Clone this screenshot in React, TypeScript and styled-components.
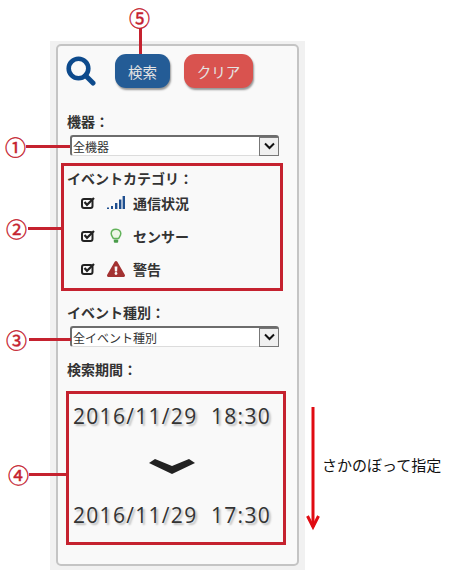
import React from 'react';
import styled, { createGlobalStyle } from 'styled-components';
import { FaExclamationTriangle } from 'react-icons/fa';

const FONT = '"Noto Sans CJK JP", "Noto Sans", sans-serif';

const GlobalStyle = createGlobalStyle`
  html, body {
    margin: 0;
    background: #fff;
  }
  body {
    font-family: ${FONT};
    color: #333;
  }
`;

const categories = [
  { name: '通信状況', icon: 'signal' },
  { name: 'センサー', icon: 'bulb' },
  { name: '警告', icon: 'warning' },
];

const callouts = [
  { mark: '①', top: 135, left: 5, lineTop: 145, lineLeft: 26, lineWidth: 44 },
  { mark: '②', top: 217, left: 6, lineTop: 227, lineLeft: 28, lineWidth: 33 },
  { mark: '③', top: 328, left: 6, lineTop: 338, lineLeft: 29, lineWidth: 42 },
  { mark: '④', top: 463, left: 8, lineTop: 473, lineLeft: 29, lineWidth: 37 },
];

const CheckIcon = () => (
  <svg width="14" height="12" viewBox="0 0 14 12">
    <rect x="1" y="2" width="10.500" height="9" rx="2" fill="none" stroke="#222" strokeWidth="2" />
    <path d="M3.500 5L6 7.800L13 1" fill="none" stroke="#222" strokeWidth="2.200" />
  </svg>
);

const SignalIcon = () => (
  <svg width="18" height="15" viewBox="0 0 18 15">
    <rect x="0" y="12.500" width="2" height="1.500" fill="#1f4f8f" />
    <rect x="4" y="11" width="2" height="3" fill="#1f4f8f" />
    <rect x="8" y="8" width="2.400" height="6" fill="#1f4f8f" />
    <rect x="12" y="4.500" width="2.400" height="9.500" fill="#1f4f8f" />
    <rect x="15.600" y="1" width="2.400" height="13" fill="#1f4f8f" />
  </svg>
);

const BulbIcon = () => (
  <svg width="12" height="16" viewBox="0 0 12 16">
    <path
      d="M6 1.200C3 1.200 1.200 3.200 1.200 5.600c0 2 1.500 3.200 2.200 5h5.200c.7-1.800 2.200-3 2.200-5C10.800 3.200 9 1.200 6 1.200z"
      fill="#eef6e8"
      stroke="#63b35b"
      strokeWidth="1.500"
    />
    <rect x="3.800" y="11.400" width="4.400" height="3.400" rx="1" fill="#4a9c4a" />
  </svg>
);

const SearchIcon = () => (
  <svg width="30" height="30" viewBox="0 0 30 30">
    <circle cx="12.500" cy="12.500" r="9.800" fill="none" stroke="#0d4a8c" strokeWidth="4.600" />
    <path d="M19.500 19.500L27 27" stroke="#0d4a8c" strokeWidth="5" strokeLinecap="round" />
  </svg>
);

const ChevronIcon = () => (
  <svg width="46" height="16" viewBox="0 0 46 16">
    <path d="M0 5L6 1L23 8L40 1L46 5L23 16z" fill="#222" />
  </svg>
);

const SelectBox = ({ text }: { text: string }) => (
  <FakeSelect>
    <span>{text}</span>
    <SelectArrow>
      <svg width="11" height="8" viewBox="0 0 11 8">
        <path d="M1 1.500L5.500 6L10 1.500" fill="none" stroke="#111" strokeWidth="2" />
      </svg>
    </SelectArrow>
  </FakeSelect>
);

const App = () => (
  <Page>
    <GlobalStyle />
    <Backdrop>
      <Panel>
        <Toolbar>
          <SearchIcon />
          <SearchButton>検索</SearchButton>
          <ClearButton>クリア</ClearButton>
        </Toolbar>

        <DeviceLabel>機器：</DeviceLabel>
        <SelectBox text="全機器" />

        <CategoryBox>
          <Label>イベントカテゴリ：</Label>
          {categories.map((c) => (
            <CategoryRow key={c.name}>
              <CheckIcon />
              <IconSlot>
                {c.icon === 'signal' && <SignalIcon />}
                {c.icon === 'bulb' && <BulbIcon />}
                {c.icon === 'warning' && <FaExclamationTriangle size={18} color="#a33232" />}
              </IconSlot>
              <CategoryName>{c.name}</CategoryName>
            </CategoryRow>
          ))}
        </CategoryBox>

        <TypeLabel>イベント種別：</TypeLabel>
        <SelectBox text="全イベント種別" />

        <PeriodLabel>検索期間：</PeriodLabel>
        <PeriodBox>
          <DateText>{'2016/11/29  18:30'}</DateText>
          <ChevronIcon />
          <DateText>{'2016/11/29  17:30'}</DateText>
        </PeriodBox>
      </Panel>
    </Backdrop>

    <TopMark>⑤</TopMark>
    <TopLine />
    {callouts.map((c) => (
      <React.Fragment key={c.mark}>
        <SideMark style={{ top: c.top, left: c.left }}>{c.mark}</SideMark>
        <SideLine style={{ top: c.lineTop, left: c.lineLeft, width: c.lineWidth }} />
      </React.Fragment>
    ))}

    <ArrowNote>
      <svg width="14" height="124" viewBox="0 0 14 124">
        <path d="M7 0V120" stroke="#e00b12" strokeWidth="3" />
        <path d="M1.500 109L7 120L12.500 109" fill="none" stroke="#e00b12" strokeWidth="3" />
      </svg>
      <NoteText>さかのぼって指定</NoteText>
    </ArrowNote>
  </Page>
);

export default App;

const Page = styled.div`
  position: relative;
  width: 458px;
  height: 570px;
  padding: 41px 0 0 50px;
  box-sizing: border-box;
  overflow: hidden;
`;

const Backdrop = styled.div`
  width: 255px;
  height: 529px;
  padding: 3px 6px 0;
  box-sizing: border-box;
  background: #f1f1f1;
`;

const Panel = styled.div`
  width: 243px;
  height: 522px;
  box-sizing: border-box;
  padding: 8px 14px 0 3px;
  background: #f9f9f9;
  border: 2px solid #c4c4c4;
  border-radius: 5px;
`;

const Toolbar = styled.div`
  display: flex;
  align-items: center;
  height: 34px;
  padding-left: 5px;

  svg {
    margin-right: 19px;
  }
`;

const PillButton = styled.div`
  display: flex;
  align-items: center;
  justify-content: center;
  height: 34px;
  box-sizing: border-box;
  border-radius: 11px;
  color: #e4e4e4;
  font-size: 14.500px;
  box-shadow: 1px 2px 2px rgba(0, 0, 0, 0.4);
`;

const SearchButton = styled(PillButton)`
  width: 55px;
  margin-right: 14px;
  background: #245c96;
`;

const ClearButton = styled(PillButton)`
  width: 69px;
  background: #d9534f;
`;

const Label = styled.div`
  font-size: 14px;
  line-height: 18px;
  font-weight: 700;
  color: #333;
`;

const DeviceLabel = styled(Label)`
  margin: 24px 0 0 6px;
`;

const FakeSelect = styled.div`
  display: flex;
  align-items: center;
  justify-content: space-between;
  width: 209px;
  height: 21px;
  margin: 5px 0 0 9px;
  padding-left: 1px;
  box-sizing: border-box;
  background: #fff;
  border-top: 2px solid #6d6d6d;
  border-left: 2px solid #6d6d6d;
  border-bottom: 1px solid #dcdcdc;
  border-radius: 3px;
  font-size: 12px;
  color: #333;
`;

const SelectArrow = styled.div`
  display: flex;
  align-items: center;
  justify-content: center;
  width: 18px;
  height: 17px;
  background: #f0f0f0;
  border: 1px solid #777;
`;

const CategoryBox = styled.div`
  width: 222px;
  height: 128px;
  margin-top: 7px;
  padding: 4px 0 0 3px;
  box-sizing: border-box;
  border: 3px solid #c5222f;

  ${Label} {
    line-height: 16px;
  }
`;

const CategoryRow = styled.div`
  display: flex;
  align-items: center;
  height: 33px;
  padding-left: 14px;
`;

const IconSlot = styled.div`
  display: flex;
  align-items: center;
  justify-content: center;
  width: 20px;
  margin: 0 7px 0 11px;
`;

const CategoryName = styled.span`
  font-size: 14px;
  font-weight: 700;
  color: #333;
`;

const TypeLabel = styled(Label)`
  margin: 12px 0 0 6px;
`;

const PeriodLabel = styled(Label)`
  margin: 13px 0 0 6px;
`;

const PeriodBox = styled.div`
  display: flex;
  flex-direction: column;
  align-items: center;
  justify-content: space-between;
  width: 220px;
  height: 154px;
  margin: 13px 0 0 5px;
  padding: 8px 8px 13px 0;
  box-sizing: border-box;
  border: 3px solid #c5222f;
`;

const DateText = styled.div`
  font-family: "Open Sans", sans-serif;
  font-size: 21px;
  line-height: 28px;
  letter-spacing: 1.300px;
  white-space: pre;
  color: #333;
  text-shadow: 2px 2px 2px rgba(0, 0, 0, 0.25);
`;

const TopMark = styled.div`
  position: absolute;
  top: 6px;
  left: 129px;
  font-size: 21px;
  line-height: 22px;
  color: #c5222f;
  -webkit-text-stroke: 0.4px #c5222f;
`;

const TopLine = styled.div`
  position: absolute;
  top: 28px;
  left: 139px;
  width: 3px;
  height: 26px;
  background: #c5222f;
`;

const SideMark = styled.div`
  position: absolute;
  font-size: 21px;
  line-height: 22px;
  color: #c5222f;
  -webkit-text-stroke: 0.4px #c5222f;
`;

const SideLine = styled.div`
  position: absolute;
  height: 3px;
  background: #c5222f;
`;

const ArrowNote = styled.div`
  position: absolute;
  top: 407px;
  left: 306px;
  display: flex;
`;

const NoteText = styled.div`
  margin: 48px 0 0 2px;
  font-size: 15px;
  line-height: 20px;
  font-weight: 400;
  color: #111;
  white-space: nowrap;
`;
